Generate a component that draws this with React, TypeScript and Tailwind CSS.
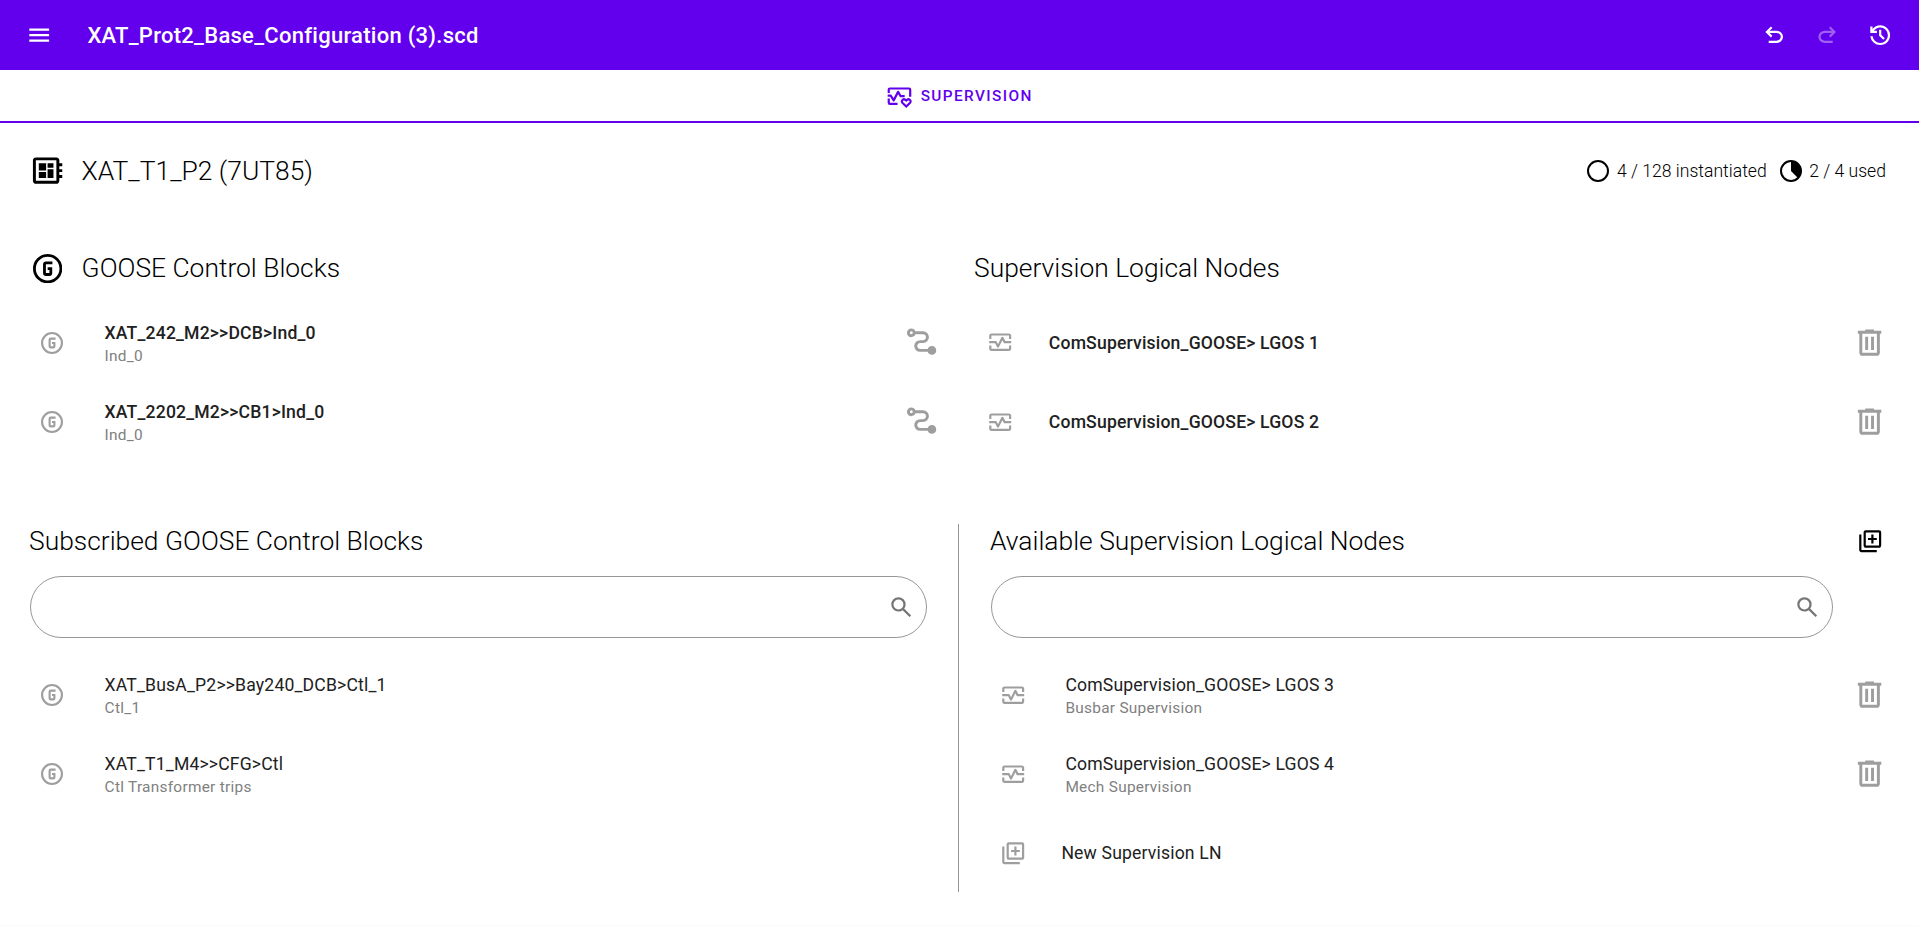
import React from "react";

type IconProps = { className?: string };

const symbol = (d: string) =>
  function Symbol({ className = "" }: IconProps) {
    return (
      <svg viewBox="0 -960 960 960" fill="currentColor" className={`shrink-0 ${className}`}>
        <path d={d} />
      </svg>
    );
  };

const MenuIcon = symbol("M120-240v-80h720v80H120Zm0-200v-80h720v80H120Zm0-200v-80h720v80H120Z");
const UndoIcon = symbol(
  "M280-200v-80h284q63 0 109.5-40T720-420q0-60-46.5-100T564-560H312l104 104-56 56-200-200 200-200 56 56-104 104h252q97 0 167 63t70 157q0 94-70 157t-167 63H280Z"
);
const RedoIcon = symbol(
  "M396-200q-97 0-167-63t-70-157q0-94 70-157t167-63h252L544-744l56-56 200 200-200 200-56-56 104-104H396q-63 0-109.5 40T240-420q0 60 46.5 100T396-280h284v80H396Z"
);
const HistoryIcon = symbol(
  "M480-120q-138 0-240.5-91.5T122-440h82q14 104 92.5 172T480-200q117 0 198.5-81.5T760-480q0-117-81.5-198.5T480-760q-69 0-129 32t-101 88h110v80H120v-240h80v94q51-64 124.5-99T480-840q75 0 140.5 28.5t114 77q48.5 48.5 77 114T840-480q0 75-28.5 140.5t-77 114q-48.5 48.5-114 77T480-120Zm112-192L440-464v-216h80v184l128 128-56 56Z"
);
const DeleteIcon = symbol(
  "M280-120q-33 0-56.5-23.5T200-200v-520h-40v-80h200v-40h240v40h200v80h-40v520q0 33-23.5 56.5T680-120H280Zm400-600H280v520h400v-520ZM360-280h80v-360h-80v360Zm160 0h80v-360h-80v360Z"
);
const PathIcon = symbol(
  "M760-120q-39 0-70-22.5T647-200H440q-66 0-113-47t-47-113q0-66 47-113t113-47h80q33 0 56.5-23.5T600-600q0-33-23.5-56.5T520-680H313q-13 35-43.5 57.5T200-600q-50 0-85-35t-35-85q0-50 35-85t85-35q39 0 69.5 22.5T313-760h207q66 0 113 47t47 113q0 66-47 113t-113 47h-80q-33 0-56.5 23.5T360-360q0 33 23.5 56.5T440-280h207q13-35 43.5-57.5T760-360q50 0 85 35t35 85q0 50-35 85t-85 35ZM228.5-691.5Q240-703 240-720t-11.5-28.5Q217-760 200-760t-28.5 11.5Q160-737 160-720t11.5 28.5Q183-680 200-680t28.5-11.5Z"
);
const SearchIcon = symbol(
  "M784-120 532-372q-30 24-69 38t-83 14q-109 0-184.500-75.500T120-580q0-109 75.500-184.500T380-840q109 0 184.500 75.500T640-580q0 44-14 83t-38 69l252 252-56 56ZM380-400q75 0 127.500-52.500T560-580q0-75-52.500-127.500T380-760q-75 0-127.500 52.500T200-580q0 75 52.500 127.500T380-400Z"
);
const LibraryAddIcon = symbol(
  "M520-400h80v-120h120v-80H600v-120h-80v120H400v80h120v120ZM320-240q-33 0-56.500-23.500T240-320v-480q0-33 23.500-56.500T320-880h480q33 0 56.500 23.500T880-800v480q0 33-23.500 56.500T800-240H320Zm0-80h480v-480H320v480ZM160-80q-33 0-56.500-23.500T80-160v-560h80v560h560v80H160Z"
);
const BoardIcon = symbol(
  "M160-120q-33 0-56.500-23.500T80-200v-560q0-33 23.500-56.500T160-840h560q33 0 56.500 23.500T800-760v80h80v80h-80v80h80v80h-80v80h80v80h-80v80q0 33-23.500 56.500T720-120H160Zm0-80h560v-560H160v560Zm80-80h200v-160H240v160Zm240-280h160v-120H480v120Zm-240 80h200v-200H240v200Zm240 200h160v-240H480v240Z"
);

function GooseIcon({ className = "" }: IconProps) {
  return (
    <svg viewBox="0 0 24 24" fill="none" stroke="currentColor" strokeWidth="2.300" className={`shrink-0 ${className}`}>
      <circle cx="12" cy="12" r="10.850" />
      <path d="M15.900 7.200H10.700q-1.300 0-1.300 1.300v7q0 1.300 1.300 1.300h2.600q1.300 0 1.300-1.300V12H12" />
    </svg>
  );
}

function MonitorIcon({ className = "" }: IconProps) {
  return (
    <svg viewBox="0 0 24 24" fill="currentColor" className={`shrink-0 ${className}`}>
      <path d="M20 4H4c-1.100 0-2 .9-2 2v3h2V6h16v3h2V6c0-1.100-.9-2-2-2zM20 18H4v-3H2v3c0 1.100.9 2 2 2h16c1.100 0 2-.9 2-2v-3h-2v3z" />
      <path d="M14.890 7.550c-.34-.68-1.450-.68-1.790 0L10 13.760l-1.110-2.210A.99.99 0 0 0 8 11H2v2h5.380l1.720 3.450c.18.34.52.55.9.55s.72-.21.89-.55L14 10.240l1.110 2.210c.17.34.51.55.89.55h6v-2h-5.380z" />
    </svg>
  );
}

function SupervisionIcon({ className = "" }: IconProps) {
  return (
    <svg viewBox="0 0 24 24" fill="none" stroke="currentColor" strokeWidth="2" className={`shrink-0 ${className}`}>
      <path d="M2.500 9V6q0-1 1-1H21q1 0 1 1v6.500M2.500 14v4q0 1 1 1h7" />
      <path d="M1.500 11.500h2.800L7 15.800 11 8l2.300 4H17" strokeLinejoin="round" />
      <path d="M18.400 21.300l-3.500-3.400c-1.600-1.800 1-4.600 3.500-2 2.500-2.600 5.100.2 3.500 2z" />
    </svg>
  );
}

type Row = { title: string; sub?: string };

const connected: { block: Row; node: string }[] = [
  { block: { title: "XAT_242_M2>>DCB>Ind_0", sub: "Ind_0" }, node: "ComSupervision_GOOSE> LGOS 1" },
  { block: { title: "XAT_2202_M2>>CB1>Ind_0", sub: "Ind_0" }, node: "ComSupervision_GOOSE> LGOS 2" },
];
const subscribed: Row[] = [
  { title: "XAT_BusA_P2>>Bay240_DCB>Ctl_1", sub: "Ctl_1" },
  { title: "XAT_T1_M4>>CFG>Ctl", sub: "Ctl Transformer trips" },
];
const available: Row[] = [
  { title: "ComSupervision_GOOSE> LGOS 3", sub: "Busbar Supervision" },
  { title: "ComSupervision_GOOSE> LGOS 4", sub: "Mech Supervision" },
];

function RowText({ title, sub, bold = false }: Row & { bold?: boolean }) {
  return (
    <div className={`flex flex-col whitespace-nowrap ${sub ? "pt-[3px]" : ""}`}>
      <span className={`text-[17.6px] leading-[22px] tracking-[0.165px] text-[#212121] ${bold ? "font-medium" : ""}`}>{title}</span>
      {sub && <span className="pt-px text-[15.4px] leading-[22px] tracking-[0.275px] text-[#808080]">{sub}</span>}
    </div>
  );
}

function Heading({ children }: { children: React.ReactNode }) {
  return <h2 className="text-[26.4px] leading-[53px] font-light whitespace-nowrap text-black">{children}</h2>;
}

function SearchField({ className }: { className: string }) {
  return (
    <div className={`flex h-[62px] items-center justify-end rounded-full border border-[#979797] pr-3 ${className}`}>
      <SearchIcon className="size-[26.4px] text-[#757575]" />
    </div>
  );
}

export default function App() {
  return (
    <div className="h-[926px] w-[1919px] overflow-hidden border-b border-[#fafafa] bg-white font-[Roboto,sans-serif]">
      <header className="flex h-[70px] items-center bg-[#6200ee] pr-[26px] pl-[25.8px] text-white">
        <MenuIcon className="size-[26.4px]" />
        <h1 className="ml-[35.2px] flex-1 pt-px text-[22px] font-medium tracking-[0.275px]">XAT_Prot2_Base_Configuration (3).scd</h1>
        <div className="flex items-center gap-[26.4px]">
          <UndoIcon className="size-[26.4px]" />
          <RedoIcon className="size-[26.4px] opacity-38" />
          <HistoryIcon className="size-[26.4px]" />
        </div>
      </header>

      <nav className="flex h-[53px] items-center justify-center gap-2 border-b-2 border-[#6200ee] pt-px text-[#6200ee]">
        <SupervisionIcon className="size-[26.4px]" />
        <span className="pt-px text-[15.4px] font-medium tracking-[1.375px]">SUPERVISION</span>
      </nav>

      <main>
        <div className="flex h-[97px] items-center pr-[33px] pl-[30px]">
          <BoardIcon className="mb-px size-[35.2px]" />
          <h1 className="ml-[16.4px] flex-1 text-[26.4px] font-light">XAT_T1_P2 (7UT85)</h1>
          <div className="flex items-center text-[17.6px] font-light">
            <svg viewBox="0 0 22 22" className="mr-[7.5px] size-[22px]">
              <circle cx="11" cy="11" r="10" fill="none" stroke="currentColor" strokeWidth="2" />
            </svg>
            4 / 128 instantiated
            <svg viewBox="0 0 22 22" className="mr-[7.5px] ml-[13px] size-[22px]">
              <circle cx="11" cy="11" r="10" fill="none" stroke="currentColor" strokeWidth="2" />
              <path d="M11 1v10l7 7A10 10 0 0 0 11 1Z" fill="currentColor" />
            </svg>
            2 / 4 used
          </div>
        </div>

        <section className="pt-[22px]">
          <div className="flex h-[53px] items-center">
            <div className="flex w-[974px] items-center pl-[33px]">
              <GooseIcon className="size-[29.3px]" />
              <div className="ml-[19.3px]">
                <Heading>GOOSE Control Blocks</Heading>
              </div>
            </div>
            <Heading>Supervision Logical Nodes</Heading>
          </div>
          <div className="pt-2">
            {connected.map(({ block, node }) => (
              <div key={block.title} className="flex h-[79.2px] items-center">
                <GooseIcon className="ml-[41px] size-[22px] text-[#9e9e9e]" />
                <div className="ml-[41.6px] flex-1">
                  <RowText {...block} bold />
                </div>
                <PathIcon className="mb-[2px] size-[35.2px] text-[#9e9e9e]" />
                <MonitorIcon className="ml-[48px] size-[26.4px] text-[#9e9e9e]" />
                <div className="ml-[35.4px] w-[803.6px]">
                  <RowText title={node} bold />
                </div>
                <DeleteIcon className="mr-[31.4px] mb-px size-[35.2px] text-[#9e9e9e]" />
              </div>
            ))}
          </div>
        </section>

        <section className="flex pt-[63px]">
          <div className="flex h-[368px] w-[959px] flex-col border-r border-[#979797] pl-[29px]">
            <div className="-mt-[9px]">
              <Heading>Subscribed GOOSE Control Blocks</Heading>
            </div>
            <SearchField className="mt-2 ml-px w-[897px]" />
            <div className="pt-[17px]">
              {subscribed.map((row) => (
                <div key={row.title} className="flex h-[79.2px] items-center">
                  <GooseIcon className="ml-3 size-[22px] text-[#9e9e9e]" />
                  <div className="ml-[41.6px]">
                    <RowText {...row} />
                  </div>
                </div>
              ))}
            </div>
          </div>
          <div className="flex flex-1 flex-col pl-[31px]">
            <div className="-mt-[9px] flex items-center justify-between pr-[35.4px]">
              <Heading>Available Supervision Logical Nodes</Heading>
              <LibraryAddIcon className="mb-[2px] size-[26.4px] text-black" />
            </div>
            <SearchField className="mt-2 ml-px w-[842px]" />
            <div className="pt-[17px]">
              {available.map((row) => (
                <div key={row.title} className="flex h-[79.2px] items-center">
                  <MonitorIcon className="ml-[10px] size-[26.4px] text-[#9e9e9e]" />
                  <div className="ml-[39px] flex-1">
                    <RowText {...row} />
                  </div>
                  <DeleteIcon className="mr-[31.4px] mb-px size-[35.2px] text-[#9e9e9e]" />
                </div>
              ))}
              <div className="flex h-[79.2px] items-center">
                <LibraryAddIcon className="ml-[10px] size-[26.4px] text-[#9e9e9e]" />
                <div className="ml-[35px]">
                  <RowText title="New Supervision LN" />
                </div>
              </div>
            </div>
          </div>
        </section>
      </main>
    </div>
  );
}
